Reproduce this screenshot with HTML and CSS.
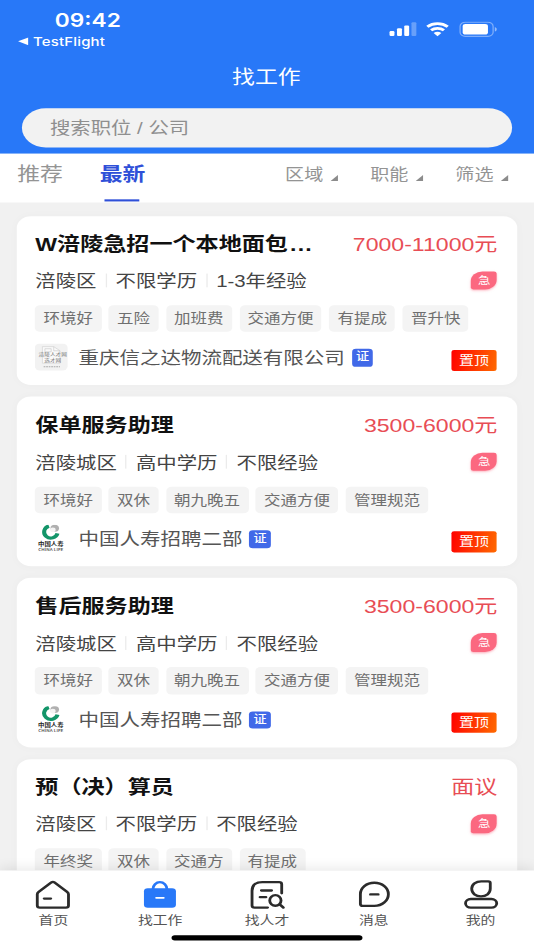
FILE: index.html
```html
<!DOCTYPE html>
<html lang="zh-CN">
<head>
<meta charset="utf-8">
<title>找工作</title>
<link rel="stylesheet" href="styles.css">
</head>
<body>
<div class="screen">
  <header class="header">
    <div class="status">
      <div class="status-left">
        <div class="time">09:42</div>
        <div class="back"><svg width="8" height="8" viewBox="0 0 8 8"><path d="M0 4 8 .3v7.4z" fill="#fff"/></svg><span>TestFlight</span></div>
      </div>
      <svg class="status-icons" width="86" height="16" viewBox="0 0 86 16" fill="#fff">
        <rect x="1" y="9.3" width="3.8" height="4.7" rx="1"/><rect x="6.8" y="6.7" width="3.8" height="7.3" rx="1"/><rect x="12.4" y="4" width="3.8" height="10" rx="1"/><rect x="18" y="1" width="3.8" height="13" rx="1" opacity=".3"/>
        <g fill="none" stroke="#fff" stroke-width="2.5"><path d="M30.3 5.2a12 12 0 0 1 15.8 0"/><path d="M33.2 8.6a7.8 7.8 0 0 1 10 0"/></g><path d="M35.2 11.2a4.6 4.6 0 0 1 6 0L38.2 14.2z"/>
        <rect x="55.7" y=".9" width="25.6" height="13.4" rx="4" fill="none" stroke="#fff" stroke-opacity=".4"/><rect x="57.7" y="2.7" width="19.6" height="9.8" rx="2.2"/><path d="M82.6 5.4v4.4c2-.7 2-3.7 0-4.4z" opacity=".5"/>
      </svg>
    </div>
    <h1 class="nav-title">找工作</h1>
    <div class="search">搜索职位 / 公司</div>
  </header>
  <nav class="tabs">
    <span class="tab">推荐</span>
    <span class="tab active">最新</span>
    <span class="filters">
      <span class="filter">区域</span><span class="filter">职能</span><span class="filter">筛选</span>
    </span>
  </nav>
  <main class="list">
    <article class="card">
      <div class="row head"><h2>W涪陵急招一个本地面包<span class="dots">...</span></h2><b class="salary">7000-11000元</b></div>
      <div class="row meta"><span>涪陵区</span><span>不限学历</span><span>1-3年经验</span><i class="urgent">急</i></div>
      <div class="row tags"><span>环境好</span><span>五险</span><span>加班费</span><span>交通方便</span><span>有提成</span><span>晋升快</span></div>
      <div class="row company">
        <svg class="logo" viewBox="0 0 26 26"><rect width="26" height="26" rx="4" fill="#f2f2f2"/><path d="M6 3h9l5 4v12H6z" fill="#fafafa" stroke="#d2d2d2" stroke-width=".6"/><path d="M8 5h5v3H8zM15 3v4h5" fill="none" stroke="#ccc" stroke-width=".6"/><text x="14.200" y="12.2" text-anchor="middle" font-size="4.5" fill="#777">涪陵人才网</text><text x="14.200" y="18.3" text-anchor="middle" font-size="4.5" fill="#777">选才网</text><path d="M7 22.5h13" stroke="#aaa" stroke-width=".9" stroke-dasharray="1.4 .6"/></svg>
        <span class="name">重庆信之达物流配送有限公司</span><i class="cert">证</i><em class="pin">置顶</em>
      </div>
    </article>
    <article class="card">
      <div class="row head"><h2>保单服务助理</h2><b class="salary">3500-6000元</b></div>
      <div class="row meta"><span>涪陵城区</span><span>高中学历</span><span>不限经验</span><i class="urgent">急</i></div>
      <div class="row tags"><span>环境好</span><span>双休</span><span>朝九晚五</span><span>交通方便</span><span>管理规范</span></div>
      <div class="row company">
        <svg class="logo" viewBox="0 0 26 26"><path d="M11.2 1.200A5.400 5.900 0 1 0 18 8.300" fill="none" stroke="#139569" stroke-width="3.2"/><circle cx="15.8" cy="3.300" r="3.4" fill="#b0b0b0"/><circle cx="14.300" cy="4.800" r="2.2" fill="#f4f4f4"/><text x="12.700" y="20.500" text-anchor="middle" font-size="5.1" font-weight="700" fill="#222">中国人寿</text><text x="12.700" y="25" text-anchor="middle" font-size="3.7" font-weight="500" fill="#444" textLength="20">CHINA LIFE</text></svg>
        <span class="name">中国人寿招聘二部</span><i class="cert">证</i><em class="pin">置顶</em>
      </div>
    </article>
    <article class="card">
      <div class="row head"><h2>售后服务助理</h2><b class="salary">3500-6000元</b></div>
      <div class="row meta"><span>涪陵城区</span><span>高中学历</span><span>不限经验</span><i class="urgent">急</i></div>
      <div class="row tags"><span>环境好</span><span>双休</span><span>朝九晚五</span><span>交通方便</span><span>管理规范</span></div>
      <div class="row company">
        <svg class="logo" viewBox="0 0 26 26"><path d="M11.2 1.200A5.400 5.900 0 1 0 18 8.300" fill="none" stroke="#139569" stroke-width="3.2"/><circle cx="15.8" cy="3.300" r="3.4" fill="#b0b0b0"/><circle cx="14.300" cy="4.800" r="2.2" fill="#f4f4f4"/><text x="12.700" y="20.500" text-anchor="middle" font-size="5.1" font-weight="700" fill="#222">中国人寿</text><text x="12.700" y="25" text-anchor="middle" font-size="3.7" font-weight="500" fill="#444" textLength="20">CHINA LIFE</text></svg>
        <span class="name">中国人寿招聘二部</span><i class="cert">证</i><em class="pin">置顶</em>
      </div>
    </article>
    <article class="card">
      <div class="row head"><h2>预（决）算员</h2><b class="salary">面议</b></div>
      <div class="row meta"><span>涪陵区</span><span>不限学历</span><span>不限经验</span><i class="urgent">急</i></div>
      <div class="row tags"><span>年终奖</span><span>双休</span><span>交通方</span><span>有提成</span></div>
    </article>
  </main>
  <footer class="tabbar">
    <div class="items">
      <div class="item"><svg viewBox="0 0 28 28"><path d="M12.8 2.300 3 11.200q-1.100 1-1.100 2.300V24q0 2 2 2h20.200q2 0 2-2V13.500q0-1.300-1.100-2.300L15.200 2.300q-1.200-1-2.400 0zM7.200 17.500h5.200"/></svg>首页</div>
      <div class="item"><svg viewBox="0 0 28 28"><path d="M8.600 8.500a5.400 6.500 0 0 1 10.800 0" stroke="#2878f8"/><rect x="1.6" y="7.7" width="24.8" height="18.5" rx="3" fill="#2878f8" stroke="none"/><path d="M11.2 16.8h5.600" stroke="#fff" stroke-width="1.8"/></svg>找工作</div>
      <div class="item"><svg viewBox="0 0 28 28"><path d="M14.5 26H4.400q-2 0-2-2V10q0-8 8-8h13q2 0 2 2v8.500M9.600 9.900h8M8.600 16.200h4.600"/><ellipse cx="20.5" cy="19.3" rx="4.4" ry="5"/><path d="m23.9 23 2.800 3"/></svg>找人才</div>
      <div class="item"><svg viewBox="0 0 28 28"><path d="M14.200 2.600c6.200 0 10.900 4.700 10.900 10.700S20.400 24.400 14.200 24.400H5.200q-1.800 0-1.800-1.800v-9.300C3.400 7.300 8 2.600 14.200 2.600zM11.200 13.600h6"/></svg>消息</div>
      <div class="item"><svg viewBox="0 0 28 28"><path d="M14.100 1.200h5.500q1.500 0 1.500 1.500v5.600c0 4.200-3.200 7.200-7.200 7.200s-7.200-3-7.200-7.200S10 1.200 14.100 1.200z"/><rect x="1.900" y="17.900" width="24.2" height="8.200" rx="4.1"/></svg>我的</div>
    </div>
    <div class="indicator"></div>
  </footer>
</div>
</body>
</html>
```
FILE: styles.css
```css
* { box-sizing: border-box; margin: 0; padding: 0; }
html, body { width: 534px; height: 950px; overflow: hidden; }
/* 414x896 layout stretched to fill the window */
.screen {
  width: 414px; height: 896px; overflow: hidden;
  transform: scale(1.28986, 1.06027); transform-origin: 0 0;
  display: flex; flex-direction: column;
  background: #f1f1f1; color: #444;
  font-family: "Liberation Sans", "Noto Sans CJK SC", sans-serif;
}
i, em { font-style: normal; }
.header { height: 145.2px; flex: none; background: #2878f8; color: #fff; }
.status { height: 50px; display: flex; justify-content: space-between; padding: 9px 26.6px 0 13.5px; font-family: Inter, sans-serif; }
.time { font-size: 17.6px; line-height: 20px; font-weight: 600; padding-left: 29px; }
.back { display: flex; align-items: center; gap: 4px; margin-top: 2.4px; font-size: 11.6px; line-height: 16px; font-weight: 500; letter-spacing: .15px; }
.status-icons { margin-top: 11px; }
.nav-title { height: 45px; line-height: 47px; padding-right: 1px; text-align: center; font-size: 17.7px; font-weight: 400; }
.search { margin: 7.3px 16.7px 0; height: 36.8px; line-height: 37.5px; padding-left: 22px; border-radius: 19px; background: #f2f2f2; color: #8f8f8f; font-size: 15.8px; }
.tabs { height: 45.4px; flex: none; display: flex; padding-left: 13px; background: #fff; color: #949494; font-size: 17.7px; line-height: 41px; white-space: nowrap; }
.tab { flex: none; width: 36px; margin-right: 28px; display: flex; flex-direction: column; align-items: center; justify-content: space-between; }
.active { color: #2f50d8; font-weight: 700; }
.active::after { content: ""; width: 27.3px; height: 2px; margin: 0 1px .6px 0; background: #2f50d8; }
.filters { display: flex; margin-left: 80px; font-size: 14.8px; }
.filter { flex: none; width: 66px; display: flex; align-items: center; height: 41px; gap: 5.7px; }
.filter::after { content: ""; width: 6.2px; height: 6.2px; margin-top: 4px; background: #8c8c8c; clip-path: polygon(100% 0, 100% 100%, 0 100%); }
.list { flex: 1; min-height: 0; padding: 13.1px 13px 0; overflow: hidden; }
.card { height: 159.7px; margin-bottom: 11px; padding: 11px 15.4px 0 14.4px; border-radius: 11px; background: #fff; box-shadow: 0 0 8px rgba(0,0,0,.025); }
.row { display: flex; align-items: center; white-space: nowrap; }
.head { height: 28px; justify-content: space-between; }
.head h2 { font-size: 17.9px; font-weight: 700; color: #111; }
.dots { letter-spacing: 1px; padding-left: 1.6px; }
.salary { font-size: 17.9px; font-weight: 400; color: #e84d55; }
.meta { height: 26px; margin-top: 9px; font-size: 15.8px; color: #444; }
.meta span + span { display: flex; align-items: center; }
.meta span + span::before { content: ""; width: 1px; height: 13px; margin: 0 6.9px; background: #ebebeb; }
.urgent { margin: 0 .3px 0 auto; width: 20px; height: 17.6px; line-height: 17.6px; text-align: center; font-size: 9.6px; color: #fff; background: #fb6880; border-radius: 9px 2px 9px 2px; box-shadow: 0 1px 2px rgba(251,104,128,.5); }
.tags { margin-top: 10.2px; gap: 5.8px; }
.tags span { height: 25.4px; line-height: 25px; padding: 0 6.4px; border-radius: 4px; background: #f4f4f4; color: #6f6f6f; font-size: 12.8px; }
.company { height: 28px; margin-top: 9.6px; }
.logo { width: 25.4px; height: 25.4px; flex: none; font-family: "Noto Sans CJK SC", sans-serif; }
.name { margin-left: 8px; font-size: 15.9px; color: #555; }
.cert { margin: 1.6px 0 0 5.5px; width: 16.6px; height: 16.6px; line-height: 16.6px; text-align: center; border-radius: 3px; background: #4169e8; color: #fff; font-size: 10.2px; font-weight: 500; }
.pin { margin: 6.6px .8px 0 auto; width: 34.8px; height: 19.8px; line-height: 19.8px; text-align: center; border-radius: 2px; background: linear-gradient(100deg, #f00, #ff6a00); color: #fff; font-size: 11.6px; }
.tabbar { position: relative; height: 75.5px; flex: none; background: #fff; box-shadow: 0 -2px 10px rgba(0,0,0,.09); }
.items { display: flex; padding-top: 9px; }
.item { flex: 1; display: flex; flex-direction: column; align-items: center; font-size: 11.5px; line-height: 15px; color: #555; gap: 3px; }
.item svg { width: 28px; height: 28px; fill: none; stroke: #2b2b2b; stroke-width: 2.2px; stroke-linecap: round; stroke-linejoin: round; }
.indicator { width: 147.5px; height: 5.4px; margin: 6.6px auto 0; border-radius: 3px; background: #000; }
```
